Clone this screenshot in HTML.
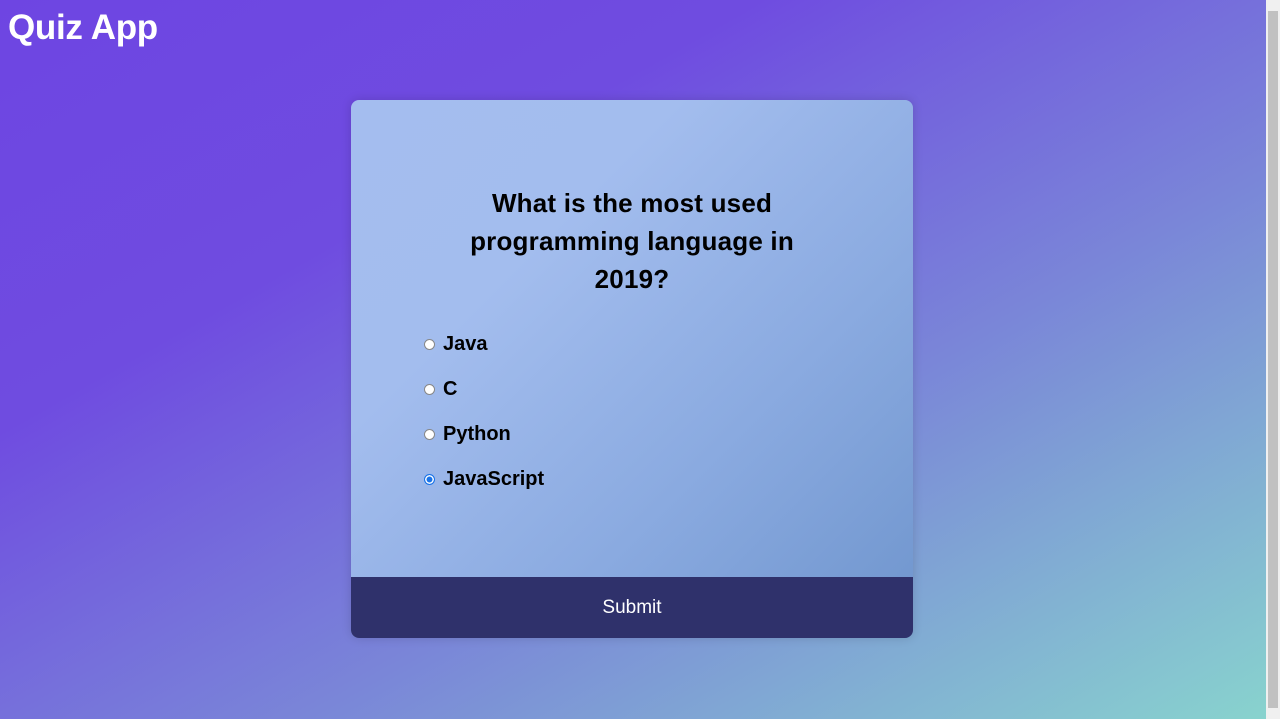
<!DOCTYPE html>
<html><head><meta charset="utf-8"><style>
*{box-sizing:border-box;margin:0;padding:0}
html,body{width:1280px;height:719px;overflow:hidden}
body{font-family:"Liberation Sans",sans-serif;position:relative;background:#6e45e2}
.main{position:absolute;left:0;top:0;width:1266px;height:719px;background:linear-gradient(to bottom right,#6e45e2 0%,#6f4ce0 30%,#7a86d8 62%,#88d3ce 100%)}
h1{position:absolute;left:8px;top:8px;color:#fff;font-size:35px;font-weight:bold;letter-spacing:-0.3px}
.card{position:absolute;left:351px;top:100px;width:562px;height:538px;border-radius:8px;overflow:hidden;background:linear-gradient(135deg,#a4bdef 0%,#a3bdee 30%,#8aaae0 65%,#6f95cd 100%);box-shadow:0 0 10px rgba(0,0,0,.15)}
.q{position:absolute;left:0;right:0;top:84px;text-align:center;font-size:26px;font-weight:bold;line-height:38px;color:#000;padding:0 90px;letter-spacing:0.2px}
.opt{position:absolute;left:73px;font-size:20px;font-weight:bold;color:#000;display:flex;align-items:center}
.r{width:11px;height:11px;border-radius:50%;background:#fff;border:1px solid #888;margin-right:8px}
.r.on{border:1.5px solid #1a73e8;box-shadow:inset 0 0 0 1.5px #fff;background:#1a73e8}
.btn{position:absolute;left:0;right:0;bottom:0;height:61px;background:#2f316b;color:#fff;font-size:19px;text-align:center;line-height:62px}
.sb{position:absolute;left:1266px;top:0;width:14px;height:719px;background:#f0f0f0}
.th{position:absolute;left:2px;top:11px;width:10px;height:697px;background:#c1c1c1}
</style></head><body>
<div class="main"></div>
<h1>Quiz App</h1>
<div class="card">
<div class="q">What is the most used programming language in 2019?</div>
<div class="opt" style="top:233px"><span class="r"></span>Java</div>
<div class="opt" style="top:278px"><span class="r"></span>C</div>
<div class="opt" style="top:323px"><span class="r"></span>Python</div>
<div class="opt" style="top:368px"><span class="r on"></span>JavaScript</div>
<div class="btn">Submit</div>
</div>
<div class="sb"><div class="th"></div></div>
</body></html>
